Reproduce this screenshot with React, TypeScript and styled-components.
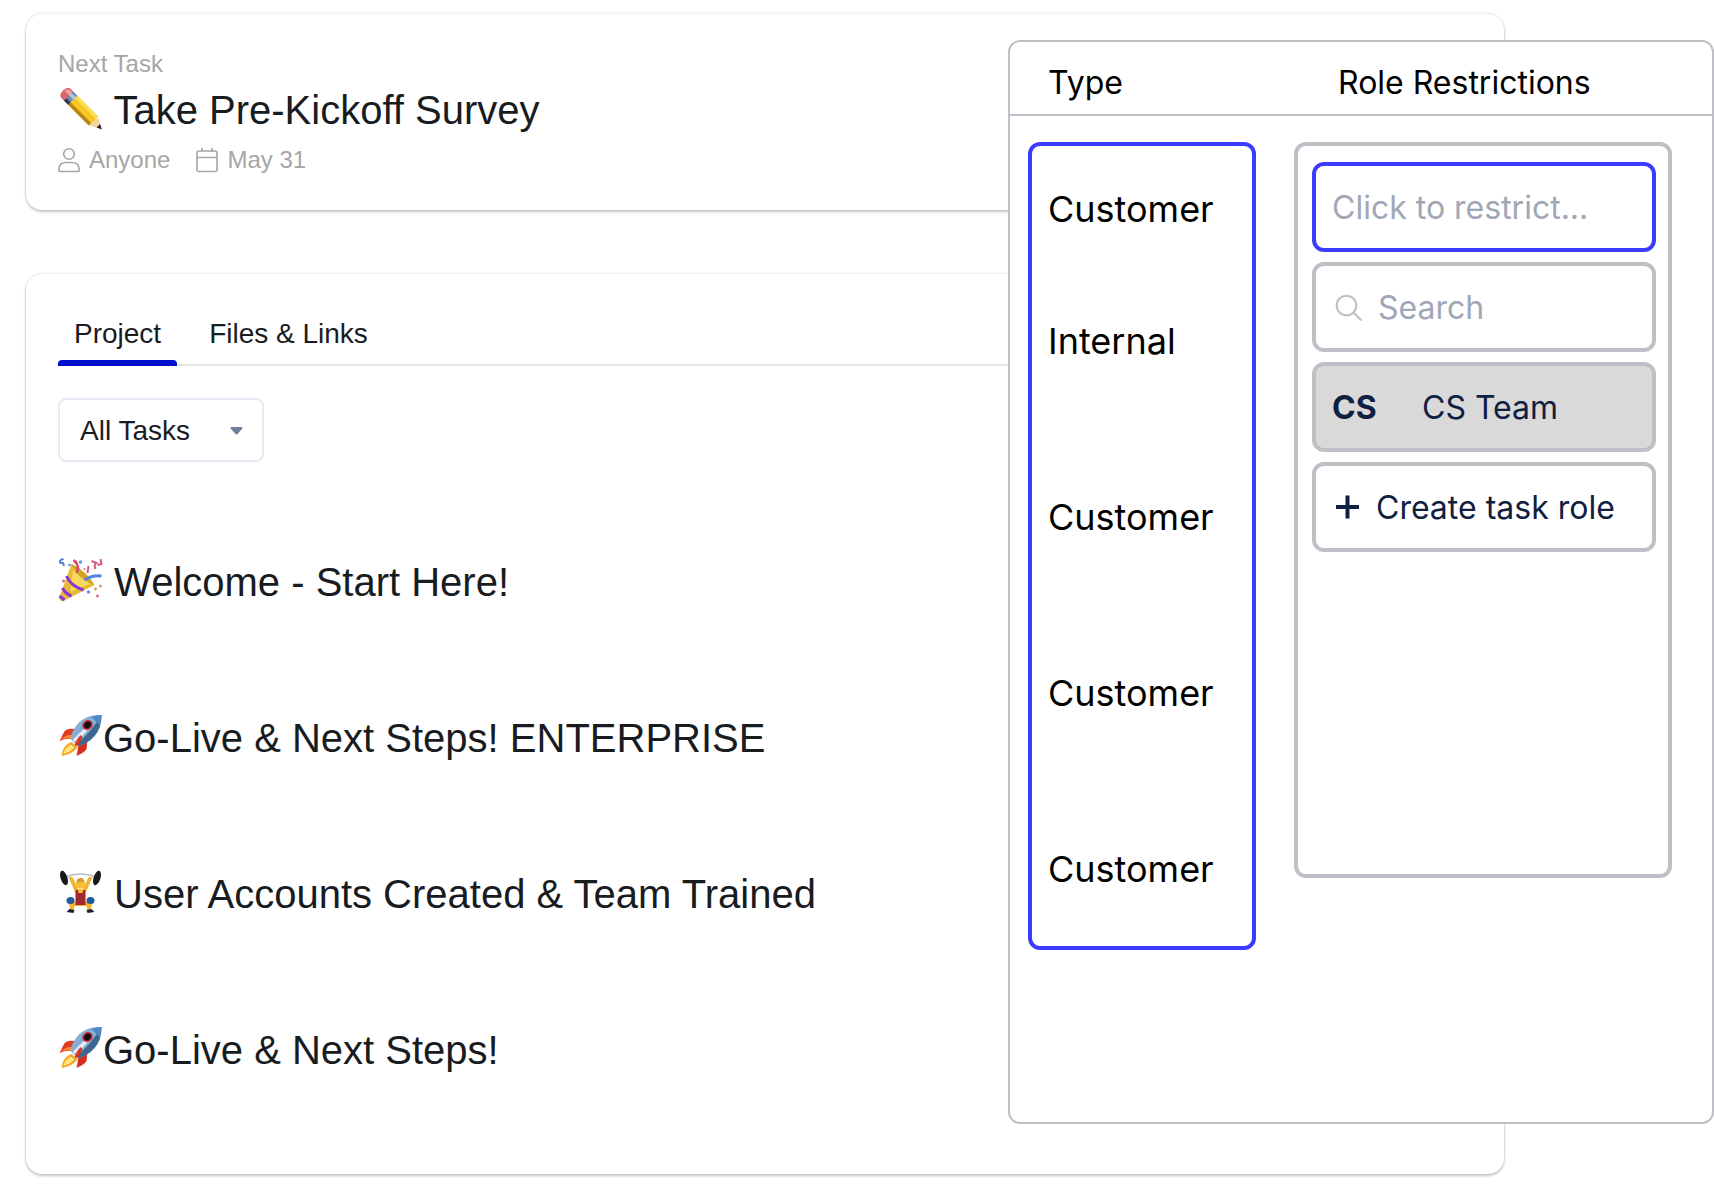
import React from "react";
import styled, { createGlobalStyle } from "styled-components";

const GlobalStyle = createGlobalStyle`
  *, *::before, *::after { box-sizing: border-box; }
  body {
    margin: 0;
    background: #fff;
    color: #191c1f;
    font-family: "Liberation Sans", Arial, sans-serif;
  }
  h1, h2, p, ul { margin: 0; padding: 0; font-weight: 400; }
  ul { list-style: none; }
  button, input, select { font: inherit; color: inherit; margin: 0; }
`;

const Page = styled.main`
  position: relative;
  display: flex;
  flex-direction: column;
  gap: 64px;
  padding: 14px 210px 22px 26px;
`;

const Card = styled.section`
  border-radius: 16px;
  background: #fff;
  box-shadow: 0 2px 3px rgba(0, 0, 0, 0.2), 0 0 3px rgba(0, 0, 0, 0.16);
`;

const NextTaskCard = styled(Card)`
  display: flex;
  flex-direction: column;
  gap: 6px;
  padding: 34px 32px;
`;

const Eyebrow = styled.p`
  color: #a6a6a6;
  font-size: 24px;
  line-height: 32px;
`;

const Heading = styled.h2`
  font-size: 40px;
  line-height: 48px;
  white-space: nowrap;
`;

const MetaRow = styled.div`
  display: flex;
  gap: 26px;
  padding-top: 4px;
  color: #a6a6a6;
  font-size: 24px;
  line-height: 32px;
`;

const Meta = styled.span`
  display: flex;
  align-items: center;
  gap: 9px;
`;

const ProjectCard = styled(Card)`
  padding: 44px 32px 46px;
`;

const Tabs = styled.div`
  display: flex;
  gap: 16px;
  box-shadow: inset 0 -2px #e5e5e5;
`;

const Tab = styled.button<{ $active?: boolean }>`
  position: relative;
  padding: 0 16px 16px;
  border: 0;
  background: none;
  font-size: 28px;
  line-height: 32px;
  cursor: pointer;

  &::after {
    content: "";
    position: absolute;
    inset: auto 0 0;
    height: 6px;
    border-radius: 4px 4px 0 0;
    background: ${(p) => (p.$active ? "#0010cc" : "transparent")};
  }
`;

const Filter = styled.div`
  position: relative;
  width: 206px;
  margin: 32px 0 42px;
`;

const FilterSelect = styled.select`
  display: block;
  width: 100%;
  height: 64px;
  padding: 0 40px 0 20px;
  border: 2px solid #e6eaf4;
  border-radius: 8px;
  background: #fff;
  font-size: 28px;
  appearance: none;
`;

const Caret = styled.svg`
  position: absolute;
  top: 29px;
  right: 21px;
  pointer-events: none;
`;

const PhaseRow = styled.li`
  display: flex;
  align-items: center;
  min-height: 156px;
`;

const EmojiSvg = styled.svg`
  width: 45px;
  height: 44px;
  vertical-align: -6px;
`;

const Panel = styled.aside`
  position: absolute;
  top: 40px;
  right: 0;
  width: 706px;
  border: 2px solid #bfc0c7;
  border-radius: 12px;
  background: #fff;
  color: #000;
  font-family: Inter, "Liberation Sans", sans-serif;
  font-size: 32px;
`;

const PanelGrid = styled.div`
  display: grid;
  grid-template-columns: 228px minmax(0, 1fr);
  column-gap: 38px;
  padding: 0 40px 0 18px;
`;

const PanelHeader = styled(PanelGrid)`
  padding-top: 21px;
  padding-bottom: 11px;
  border-bottom: 2px solid #bfc0c7;
`;

const ColumnTitle = styled.h2<{ $indent: number }>`
  padding-left: ${(p) => p.$indent}px;
  font-size: 32px;
  line-height: 40px;
`;

const PanelBody = styled(PanelGrid)`
  align-items: start;
  padding-top: 26px;
  padding-bottom: 172px;
`;

const TypeList = styled.ul`
  padding: 41px 16px 55px;
  border: 4px solid #3d3bff;
  border-radius: 12px;
  font-size: 36px;
  line-height: 44px;
`;

const TypeItem = styled.li<{ $space: number }>`
  margin-bottom: ${(p) => p.$space}px;
`;

const RoleBox = styled.div`
  display: flex;
  flex-direction: column;
  gap: 10px;
  min-height: 736px;
  padding: 16px 12px 16px 14px;
  border: 4px solid #bfc0c7;
  border-radius: 12px;
`;

const frame = `
  display: flex;
  align-items: center;
  gap: 16px;
  width: 100%;
  height: 90px;
  padding: 0 16px;
  border: 4px solid #bfc0c7;
  border-radius: 12px;
  background: #fff;
  text-align: left;
`;

const Field = styled.label<{ $focused?: boolean }>`
  ${frame}
  ${(p) => p.$focused && "border-color: #3d3bff;"}
`;

const FieldInput = styled.input`
  flex: 1;
  width: 100%;
  min-width: 0;
  height: 48px;
  padding: 0;
  border: 0;
  outline: 0;
  background: none;
  &::placeholder { color: #a0a7b7; opacity: 1; }
`;

const RoleButton = styled.button<{ $selected?: boolean }>`
  ${frame}
  ${(p) => p.$selected && "background: #d9d9d9;"}
  color: #0f2042;
  white-space: nowrap;
  cursor: pointer;
`;

const Initials = styled.strong`
  width: 74px;
  font-weight: 700;
`;

function Pencil() {
  return (
    <EmojiSvg viewBox="0 0 44 44" aria-hidden="true">
      <g transform="translate(4.5 4.5) rotate(45)">
        <path d="M4-6.5H9V6.5H4Q0 6 0 0T4-6.5Z" fill="#d9676c" />
        <path d="M3-5H9V-1H1Z" fill="#f0a3a3" />
        <rect x="8" y="-6.5" width="6" height="13" fill="#6f8fb8" />
        <rect x="8" y="-4" width="6" height="3" fill="#b5cbe4" />
        <rect x="8" y="3" width="6" height="3.5" fill="#2e3b4c" />
        <path d="M14-6.5H43L44 0 43 6.5H14Z" fill="#f6c624" />
        <path d="M14-6.5H43V-3H14Z" fill="#fbdc55" />
        <path d="M14 3H43V6.5H14Z" fill="#b98510" />
        <path d="M43-6.5 54 0 43 6.5Q45 3 43 2Q45 0 43-2Q45-4 43-6.5Z" fill="#f2d6a0" />
        <path d="M50-2.5 55 0 50 2.5Z" fill="#25232b" />
      </g>
    </EmojiSvg>
  );
}

function Party() {
  return (
    <EmojiSvg viewBox="0 0 44 44" aria-hidden="true">
      <path d="M13 6Q28 13 36 27L5 43Q1 44 1 39Z" fill="#e9bb30" />
      <path d="M15 9Q25 15 31 26L12 34Z" fill="#f5d85c" />
      <path d="M13 6Q17 19 36 27Q26 12 13 6Z" fill="#d3a224" />
      <path d="M8 18Q12 28 25 32" fill="none" stroke="#8a36d6" strokeWidth="3" />
      <path d="M4 30Q7 36 13 38M1 38L6 42" fill="none" stroke="#8a36d6" strokeWidth="3" />
      <path d="M18 15Q22 8 15 2M20 12Q19 6 17 3" fill="none" stroke="#d54a6d" strokeWidth="2.4" />
      <path d="M26 22Q34 17 43 18" fill="none" stroke="#5084e3" strokeWidth="3" />
      <path d="M5 1Q0 2 2 5Q6 4 5 8" fill="none" stroke="#4e79d8" strokeWidth="2" />
      <path d="M33 3L38 5Q35 7 37 11M42 1L43 6L39 7M30 8L29 15" fill="none" stroke="#d8577c" strokeWidth="2" />
      <g fill="#5f91e8"><circle cx="22" cy="4" r="1.7" /><circle cx="11" cy="7" r="1.3" /><circle cx="30" cy="34" r="1.7" /></g>
      <g fill="#dc6b74"><circle cx="5" cy="23" r="1.5" /><circle cx="39" cy="38" r="1.5" /><circle cx="26" cy="11" r="1" /></g>
      <g fill="#df9655"><circle cx="42" cy="28" r="1.5" /><circle cx="37" cy="31" r="1.4" /></g>
    </EmojiSvg>
  );
}

function Rocket() {
  return (
    <EmojiSvg viewBox="0 0 44 44" aria-hidden="true">
      <path d="M13 28Q4 31 3 42Q15 40 19 33Z" fill="#f4a929" />
      <path d="M12 31Q6 34 5 40Q12 38 16 33Z" fill="#ffe87c" />
      <path d="M17 15Q7 14 5 19L1 27Q8 24 14 25Z" fill="#e13a25" />
      <path d="M2 26Q8 23 13 25L15 21Q8 20 2 26Z" fill="#f58b33" />
      <path d="M20 31L18 42Q27 38 28 35L29 26Z" fill="#d92c20" />
      <path d="M43 1Q29 0 20 9Q13 17 12 25L19 32Q29 30 36 22Q43 14 43 1Z" fill="#86aed2" />
      <path d="M43 1Q43 14 36 22Q29 30 19 32L17 30Q30 22 43 1Z" fill="#3c678f" />
      <path d="M34 7Q29 20 16 28L14 26Q22 18 34 7Z" fill="#e6edf3" />
      <path d="M43 1Q38 1 33 3L41 11Q43 7 43 1Z" fill="#4b8ac5" />
      <ellipse cx="29" cy="11" rx="5.5" ry="4.7" transform="rotate(-40 29 11)" fill="#c42a2b" />
      <ellipse cx="29" cy="11" rx="3.8" ry="3" transform="rotate(-40 29 11)" fill="#120f14" />
      <path d="M22 21Q18 25 16 32L20 31Q22 27 24 23Z" fill="#df3324" />
    </EmojiSvg>
  );
}

function Lifter() {
  return (
    <EmojiSvg viewBox="0 0 44 44" aria-hidden="true">
      <path d="M6 7Q22 1 38 7" fill="none" stroke="#b9bcc0" strokeWidth="1.6" />
      <ellipse cx="5.5" cy="8" rx="3.4" ry="7.5" transform="rotate(-18 5.5 8)" fill="#17191c" />
      <ellipse cx="38.5" cy="8" rx="3.4" ry="7.5" transform="rotate(18 38.5 8)" fill="#17191c" />
      <path d="M10 7H14L20 20 17 23ZM34 7H30L24 20 27 23Z" fill="#f3b32b" />
      <circle cx="22" cy="14" r="4.5" fill="#f5bd35" />
      <path d="M18 13Q18 8 22 8T26 13Q22 10 18 13Z" fill="#dc9820" />
      <path d="M17 32L10 33 12 40H15L16 36H28L29 40H32L34 33 27 32Z" fill="#f3b32b" />
      <path d="M17 20H27V35H17Z" fill="#a1292c" />
      <path d="M19 19H25L24 23H20Z" fill="#f5bd35" />
      <ellipse cx="12" cy="30.5" rx="4" ry="3.5" fill="#24599c" />
      <ellipse cx="32" cy="30.5" rx="4" ry="3.5" fill="#24599c" />
      <path d="M11 39L16 40 15 43 8 42ZM33 39L28 40 29 43 36 42Z" fill="#1b2230" />
    </EmojiSvg>
  );
}

const phases = [
  { icon: <Party />, title: " Welcome - Start Here!" },
  { icon: <Rocket />, title: "Go-Live & Next Steps! ENTERPRISE" },
  { icon: <Lifter />, title: " User Accounts Created & Team Trained" },
  { icon: <Rocket />, title: "Go-Live & Next Steps!" },
];

const types = [
  { name: "Customer", space: 88 },
  { name: "Internal", space: 132 },
  { name: "Customer", space: 132 },
  { name: "Customer", space: 132 },
  { name: "Customer", space: 0 },
];

export default function App() {
  return (
    <>
      <GlobalStyle />
      <Page>
        <NextTaskCard>
          <Eyebrow>Next Task</Eyebrow>
          <Heading><Pencil /> Take Pre-Kickoff Survey</Heading>
          <MetaRow>
            <Meta>
              <svg width="22" height="26" viewBox="0 0 22 26" fill="none" stroke="currentColor" strokeWidth="1.6" aria-hidden="true">
                <circle cx="11" cy="7" r="5.3" />
                <path d="M1 24.5V22Q1 15.5 8 15.5H14Q21 15.5 21 22V24.5Z" strokeLinejoin="round" />
              </svg>
              Anyone
            </Meta>
            <Meta>
              <svg width="22" height="26" viewBox="0 0 22 26" fill="none" stroke="currentColor" strokeWidth="1.6" aria-hidden="true">
                <rect x="1" y="4" width="20" height="20.5" rx="2" />
                <path d="M1 10.500H21M6 1V5M16 1V5" />
              </svg>
              May 31
            </Meta>
          </MetaRow>
        </NextTaskCard>

        <ProjectCard>
          <Tabs role="tablist">
            <Tab role="tab" aria-selected="true" $active>Project</Tab>
            <Tab role="tab" aria-selected="false">Files &amp; Links</Tab>
          </Tabs>
          <Filter>
            <FilterSelect aria-label="Filter tasks" defaultValue="all">
              <option value="all">All Tasks</option>
            </FilterSelect>
            <Caret width="13" height="8" viewBox="0 0 13 8" aria-hidden="true">
              <path d="M1 0H12Q13 1 12 2L7.500 7Q6.500 8 5.500 7L1 2Q0 1 1 0Z" fill="#6c7f99" />
            </Caret>
          </Filter>
          <ul>
            {phases.map((phase, i) => (
              <PhaseRow key={i}>
                <Heading>{phase.icon}{phase.title}</Heading>
              </PhaseRow>
            ))}
          </ul>
        </ProjectCard>

        <Panel>
          <PanelHeader>
            <ColumnTitle $indent={20}>Type</ColumnTitle>
            <ColumnTitle $indent={44}>Role Restrictions</ColumnTitle>
          </PanelHeader>
          <PanelBody>
            <TypeList>
              {types.map((type, i) => (
                <TypeItem key={i} $space={type.space}>{type.name}</TypeItem>
              ))}
            </TypeList>
            <RoleBox>
              <Field $focused>
                <FieldInput aria-label="Restrict to role" placeholder="Click to restrict..." />
              </Field>
              <Field>
                <svg width="30" height="28" viewBox="0 0 30 28" fill="none" stroke="#bfc0c7" strokeWidth="2" aria-hidden="true">
                  <circle cx="14.5" cy="12.5" r="9.8" />
                  <path d="M21.500 19.500L29.500 27.500" />
                </svg>
                <FieldInput type="search" aria-label="Search roles" placeholder="Search" />
              </Field>
              <RoleButton $selected>
                <Initials>CS</Initials>
                CS Team
              </RoleButton>
              <RoleButton>
                <svg width="28" height="28" viewBox="0 0 28 28" stroke="currentColor" strokeWidth="4" aria-hidden="true">
                  <path d="M4 14H27M15.500 2.500V25.500" />
                </svg>
                Create task role
              </RoleButton>
            </RoleBox>
          </PanelBody>
        </Panel>
      </Page>
    </>
  );
}
